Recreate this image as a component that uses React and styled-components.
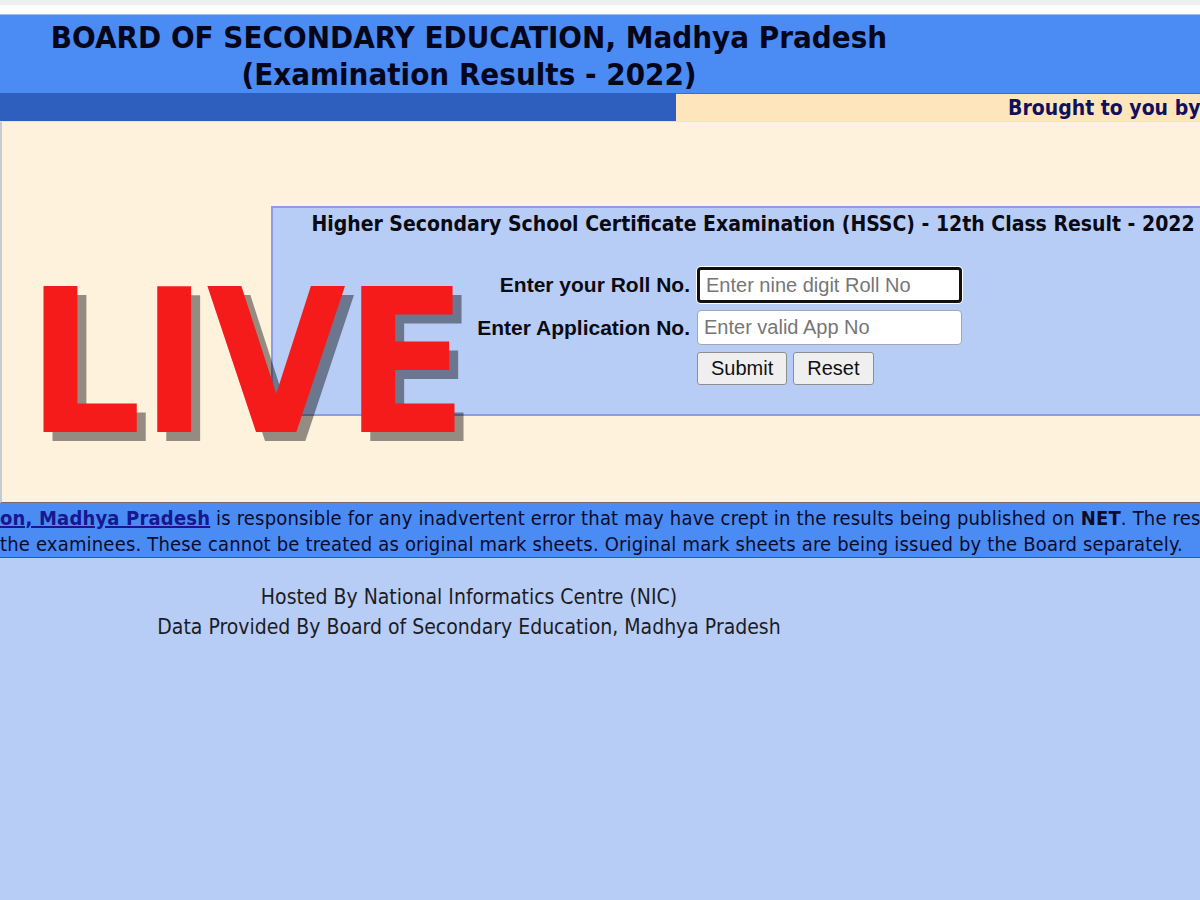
import React from 'react'
import styled, { createGlobalStyle } from 'styled-components'

const GlobalStyle = createGlobalStyle`
  html, body {
    margin: 0;
    padding: 0;
    background: #b8cdf5;
    overflow: hidden;
  }
  #root {
    min-height: 100vh;
  }
`;

const tahoma = `"DejaVu Sans Condensed", "DejaVu Sans", sans-serif`;
const arial = `"Liberation Sans", Arial, sans-serif`;

const Page = styled.div`
  position: relative;
  width: 1200px;
  min-height: 900px;
  overflow: hidden;
  background: #b8cdf5;
  font-family: ${tahoma};
  font-stretch: condensed;
`;

const TopStrip = styled.div`
  height: 9px;
  background: #ffffff;
  border-top: 5px solid #eef0ef;
  border-bottom: 1px solid #9dc0f9;
`;

const Header = styled.header`
  height: 78px;
  background: #4b8bf4;
`;

const TitleBlock = styled.h1`
  width: 938px;
  margin: 0;
  padding-top: 4px;
  text-align: center;
  font-size: 31px;
  line-height: 37px;
  font-weight: bold;
  color: #06061a;
  white-space: nowrap;
`;

const SubBar = styled.div`
  display: flex;
  height: 28px;
  border-bottom: 1px solid #dfe3ea;
`;

const SubBarCell = styled.div`
  flex: ${p => (p.$grow ? '1' : `0 0 ${p.$width}px`)};
  background: ${p => p.$bg};
  border-top: 1px solid ${p => p.$line};
  box-sizing: border-box;
  padding-left: ${p => p.$pad || 0}px;
  font-size: 21px;
  line-height: 29px;
  font-weight: bold;
  color: #10105c;
  white-space: nowrap;
  overflow: hidden;
`;

const MainPanel = styled.section`
  height: 380px;
  background: #fff2dd;
  border-left: 2px solid #c4cad6;
  border-bottom: 1px solid #7e6670;
  overflow: hidden;
`;

const FormBox = styled.div`
  width: 960px;
  height: 206px;
  margin: 84px 0 0 269px;
  background: #b7cdf6;
  border: 2px solid #8c9ce6;
`;

const FormTitle = styled.h2`
  margin: 0;
  padding-top: 3px;
  text-align: center;
  font-size: 21px;
  line-height: 26px;
  font-weight: bold;
  color: #0a0a14;
  white-space: nowrap;
`;

const FormGrid = styled.div`
  display: grid;
  grid-template-columns: 417px 265px;
  column-gap: 7px;
  row-gap: 7px;
  margin-top: 30px;
  align-items: center;
`;

const Label = styled.label`
  text-align: right;
  font-family: ${arial};
  font-size: 21px;
  font-weight: bold;
  color: #0b0b12;
  white-space: nowrap;
`;

const Input = styled.input`
  box-sizing: border-box;
  width: 265px;
  height: ${p => (p.$focused ? 36 : 35)}px;
  margin: 0;
  padding: 0 6px;
  background: #ffffff;
  border: ${p => (p.$focused ? '3px solid #111111' : '1px solid #a2a6ae')};
  border-radius: 4px;
  box-shadow: ${p => (p.$focused ? '0 0 0 1px #ffffff' : 'none')};
  font-family: ${arial};
  font-size: 20px;
  color: #111;
  outline: none;
  &::placeholder {
    color: #767676;
  }
`;

const ButtonRow = styled.div`
  grid-column: 2;
  display: flex;
  gap: 6px;
`;

const Button = styled.button`
  height: 33px;
  padding: 0 13px;
  background: #efefef;
  border: 1px solid #8e8e8e;
  border-radius: 3px;
  font-family: ${arial};
  font-size: 20px;
  color: #111;
`;

/* big red "LIVE" stamp laid over the page */
const LiveStamp = styled.div`
  position: absolute;
  left: 27px;
  top: 253px;
  font-family: "DejaVu Sans Condensed", "DejaVu Sans", sans-serif;
  font-stretch: condensed;
  font-weight: bold;
  font-size: 200px;
  line-height: 220px;
  letter-spacing: -1px;
  color: #f51b1b;
  text-shadow: 9px 9px 0 rgba(0, 0, 0, 0.42);
  pointer-events: none;
`;

const Notice = styled.div`
  padding-top: 2px;
  background: #4b8bf4;
  border-bottom: 1px solid #4c4c80;
  overflow-x: hidden;
`;

const NoticeLine = styled.p`
  margin: 0;
  font-size: 20px;
  line-height: 26px;
  letter-spacing: 0.18px;
  color: #0b0b2e;
  white-space: nowrap;
`;

const NoticeLink = styled.a`
  color: #17178f;
  font-weight: bold;
  text-decoration: underline;
`;

const Footer = styled.footer`
  width: 938px;
  padding-top: 24px;
  text-align: center;
  font-size: 21px;
  line-height: 30px;
  color: #1c1c24;
`;

export default function App() {
  return (
    <>
      <GlobalStyle />
      <Page>
        <TopStrip />
        <Header>
          <TitleBlock>
            BOARD OF SECONDARY EDUCATION, Madhya Pradesh
            <br />
            (Examination Results - 2022)
          </TitleBlock>
        </Header>
        <SubBar>
          <SubBarCell $width={676} $bg="#2e5fbf" $line="#2e5fbf" />
          <SubBarCell $grow $bg="#ffe5bb" $line="#7c6060" $pad={332}>
            Brought to you by
          </SubBarCell>
        </SubBar>
        <MainPanel>
          <FormBox>
            <FormTitle>
              Higher Secondary School Certificate Examination (HSSC) - 12th Class Result - 2022
            </FormTitle>
            <FormGrid>
              <Label htmlFor="roll">Enter your Roll No.</Label>
              <Input id="roll" $focused placeholder="Enter nine digit Roll No" />
              <Label htmlFor="app">Enter Application No.</Label>
              <Input id="app" placeholder="Enter valid App No" />
              <ButtonRow>
                <Button type="button">Submit</Button>
                <Button type="button">Reset</Button>
              </ButtonRow>
            </FormGrid>
          </FormBox>
        </MainPanel>
        <Notice>
          <NoticeLine>
            <NoticeLink href="#">on, Madhya Pradesh</NoticeLink> is responsible for any
            inadvertent error that may have crept in the results being published on{' '}
            <b>NET</b>. The res
          </NoticeLine>
          <NoticeLine>
            the examinees. These cannot be treated as original mark sheets. Original mark
            sheets are being issued by the Board separately.
          </NoticeLine>
        </Notice>
        <Footer>
          Hosted By National Informatics Centre (NIC)
          <br />
          Data Provided By Board of Secondary Education, Madhya Pradesh
        </Footer>
        <LiveStamp>LIVE</LiveStamp>
      </Page>
    </>
  )
}
